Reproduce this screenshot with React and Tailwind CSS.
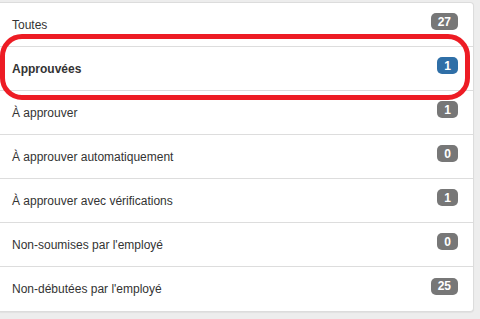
const items = [
  { label: "Toutes", count: 27 },
  { label: "Approuvées", count: 1, active: true },
  { label: "À approuver", count: 1 },
  { label: "À approuver automatiquement", count: 0 },
  { label: "À approuver avec vérifications", count: 1 },
  { label: "Non-soumises par l'employé", count: 0 },
  { label: "Non-débutées par l'employé", count: 25 },
];

const App = () => {
  return (
    <div
      className="relative w-[480px] h-[319px] overflow-hidden bg-[#ededed] pt-[2px]"
      style={{ fontFamily: '"Liberation Sans", Arial, sans-serif' }}
    >
      {/* Panel */}
      <ul className="w-[474px] bg-white border border-l-0 border-[#dcdcdc] rounded-br-[4px] rounded-tr-[4px] shadow-[0_1px_1px_rgba(0,0,0,0.05)]">
        {items.map((item, i) => (
          <li
            key={item.label}
            className={
              "h-[44px] flex items-center justify-between pl-[12px] pr-[15px] text-[12px] text-[#333] " +
              (i < items.length - 1 ? "border-b border-[#ddd]" : "")
            }
          >
            <span className={item.active ? "font-bold" : ""}>{item.label}</span>
            <span
              className={
                "mb-[6px] h-[17px] min-w-[20px] px-[7px] flex items-center justify-center rounded-[5px] text-white text-[12px] font-bold leading-none " +
                (item.active ? "bg-[#2f6fa7]" : "bg-[#777]")
              }
            >
              {item.count}
            </span>
          </li>
        ))}
      </ul>

      {/* Red annotation around "Approuvées" */}
      <div className="absolute left-0 top-[34px] w-[470px] h-[66px] border-[5px] border-[#ed1c24] rounded-[22px] pointer-events-none" />
    </div>
  );
};

export default App;
